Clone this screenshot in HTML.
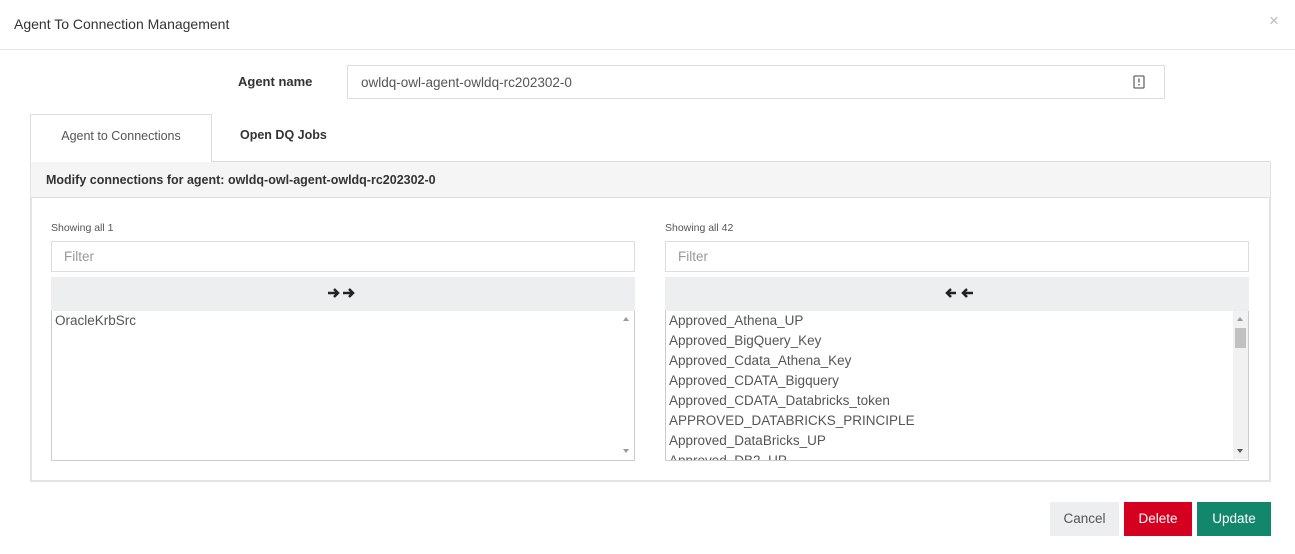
<!DOCTYPE html>
<html><head><style>
*{box-sizing:border-box;margin:0;padding:0}
body{width:1295px;height:554px;background:#fff;font-family:"Liberation Sans",sans-serif;color:#333;position:relative;overflow:hidden}
.a{position:absolute}
.title{left:14px;top:16px;font-size:14px;color:#333}
.close{left:1269px;top:11px;font-size:17px;color:#bbb}
.hr{left:0;top:49px;width:1295px;height:1px;background:#e5e5e5}
.lbl{left:238px;top:74px;font-size:13px;font-weight:bold;color:#333}
.inp{left:347px;top:65px;width:818px;height:34px;border:1px solid #ddd;font-size:13.5px;color:#555;padding:9px 13px}
.tab1{left:30px;top:114px;width:182px;height:48px;border:1px solid #ddd;border-bottom:none;background:#fff;font-size:12.5px;color:#555;text-align:center;padding-top:14px;z-index:2}
.tab2{left:240px;top:128px;font-size:12.5px;font-weight:bold;color:#333}
.tabline{left:212px;top:161px;width:1059px;height:1px;background:#ddd}
.panel{left:30px;top:161px;width:1241px;height:321px;border:2px solid #e3e3e3;border-top:1px solid #ddd}
.ph{left:31px;top:162px;width:1239px;height:36px;background:#f5f5f5;border-bottom:1px solid #ddd;font-size:12.5px;font-weight:bold;color:#333;padding:11px 15px}
.sh{font-size:10.5px;color:#555}
.flt{height:31px;border:1px solid #ddd;font-size:13.5px;color:#999;padding:7px 12px;width:584px}
.bar{height:34px;background:#eceeef;width:584px;text-align:center;padding-top:9px}
.sel{width:584px;height:150px;border:1px solid #ccc;border-top:none;font-size:13.5px;color:#555;padding:0 3px;line-height:20px;overflow:hidden}
.sb{right:0;top:0;width:15px;height:148px;background:#f1f1f1}
.btn{top:502px;height:34px;font-size:13.5px;text-align:center;padding-top:9px}
</style></head><body>
<div class="a title">Agent To Connection Management</div>
<div class="a close">×</div>
<div class="a hr"></div>
<div class="a lbl">Agent name</div>
<div class="a inp">owldq-owl-agent-owldq-rc202302-0</div>
<svg class="a" style="left:1133px;top:75px" width="12" height="14" viewBox="0 0 12 14"><rect x="1" y="1" width="10" height="12" rx="1" fill="none" stroke="#666" stroke-width="1.3"/><rect x="5.3" y="3.5" width="1.4" height="4" fill="#666"/><rect x="5.3" y="9" width="1.4" height="1.5" fill="#666"/></svg>
<div class="a tab1">Agent to Connections</div>
<div class="a tab2">Open DQ Jobs</div>
<div class="a tabline"></div>
<div class="a panel"></div>
<div class="a ph">Modify connections for agent: owldq-owl-agent-owldq-rc202302-0</div>

<div class="a sh" style="left:51px;top:222px">Showing all 1</div>
<div class="a flt" style="left:51px;top:241px">Filter</div>
<div class="a bar" style="left:51px;top:277px"><svg width="32" height="14" viewBox="0 0 32 14"><path d="M1 7h9M7 3l4 4-4 4" stroke="#222" stroke-width="2.5" fill="none"/><path d="M16 7h10M22 3l4 4-4 4" stroke="#222" stroke-width="2.5" fill="none"/></svg></div>
<div class="a sel" style="left:51px;top:311px">OracleKrbSrc<div class="a sb" style="background:#fff"><div style="position:absolute;left:4px;top:6px;border:3.5px solid transparent;border-bottom:4px solid #999;border-top:none"></div><div style="position:absolute;left:4px;bottom:6px;border:3.5px solid transparent;border-top:4px solid #999;border-bottom:none"></div></div></div>

<div class="a sh" style="left:665px;top:222px">Showing all 42</div>
<div class="a flt" style="left:665px;top:241px">Filter</div>
<div class="a bar" style="left:665px;top:277px"><svg width="32" height="14" viewBox="0 0 32 14"><path d="M6 7h9M10 3l-4 4 4 4" stroke="#222" stroke-width="2.5" fill="none"/><path d="M22 7h10M26 3l-4 4 4 4" stroke="#222" stroke-width="2.5" fill="none"/></svg></div>
<div class="a sel" style="left:665px;top:311px">Approved_Athena_UP<br>Approved_BigQuery_Key<br>Approved_Cdata_Athena_Key<br>Approved_CDATA_Bigquery<br>Approved_CDATA_Databricks_token<br>APPROVED_DATABRICKS_PRINCIPLE<br>Approved_DataBricks_UP<br>Approved_DB2_UP<div class="a sb"><div style="position:absolute;left:4px;top:6px;border:3.5px solid transparent;border-bottom:4px solid #999;border-top:none"></div><div style="position:absolute;left:2px;top:17px;width:11px;height:20px;background:#c1c1c1"></div><div style="position:absolute;left:4px;bottom:6px;border:3.5px solid transparent;border-top:4px solid #555;border-bottom:none"></div></div></div>

<div class="a btn" style="left:1050px;width:69px;background:#eceeef;color:#555">Cancel</div>
<div class="a btn" style="left:1124px;width:68px;background:#d50020;color:#fff">Delete</div>
<div class="a btn" style="left:1197px;width:74px;background:#12876c;color:#fff">Update</div>
</body></html>
